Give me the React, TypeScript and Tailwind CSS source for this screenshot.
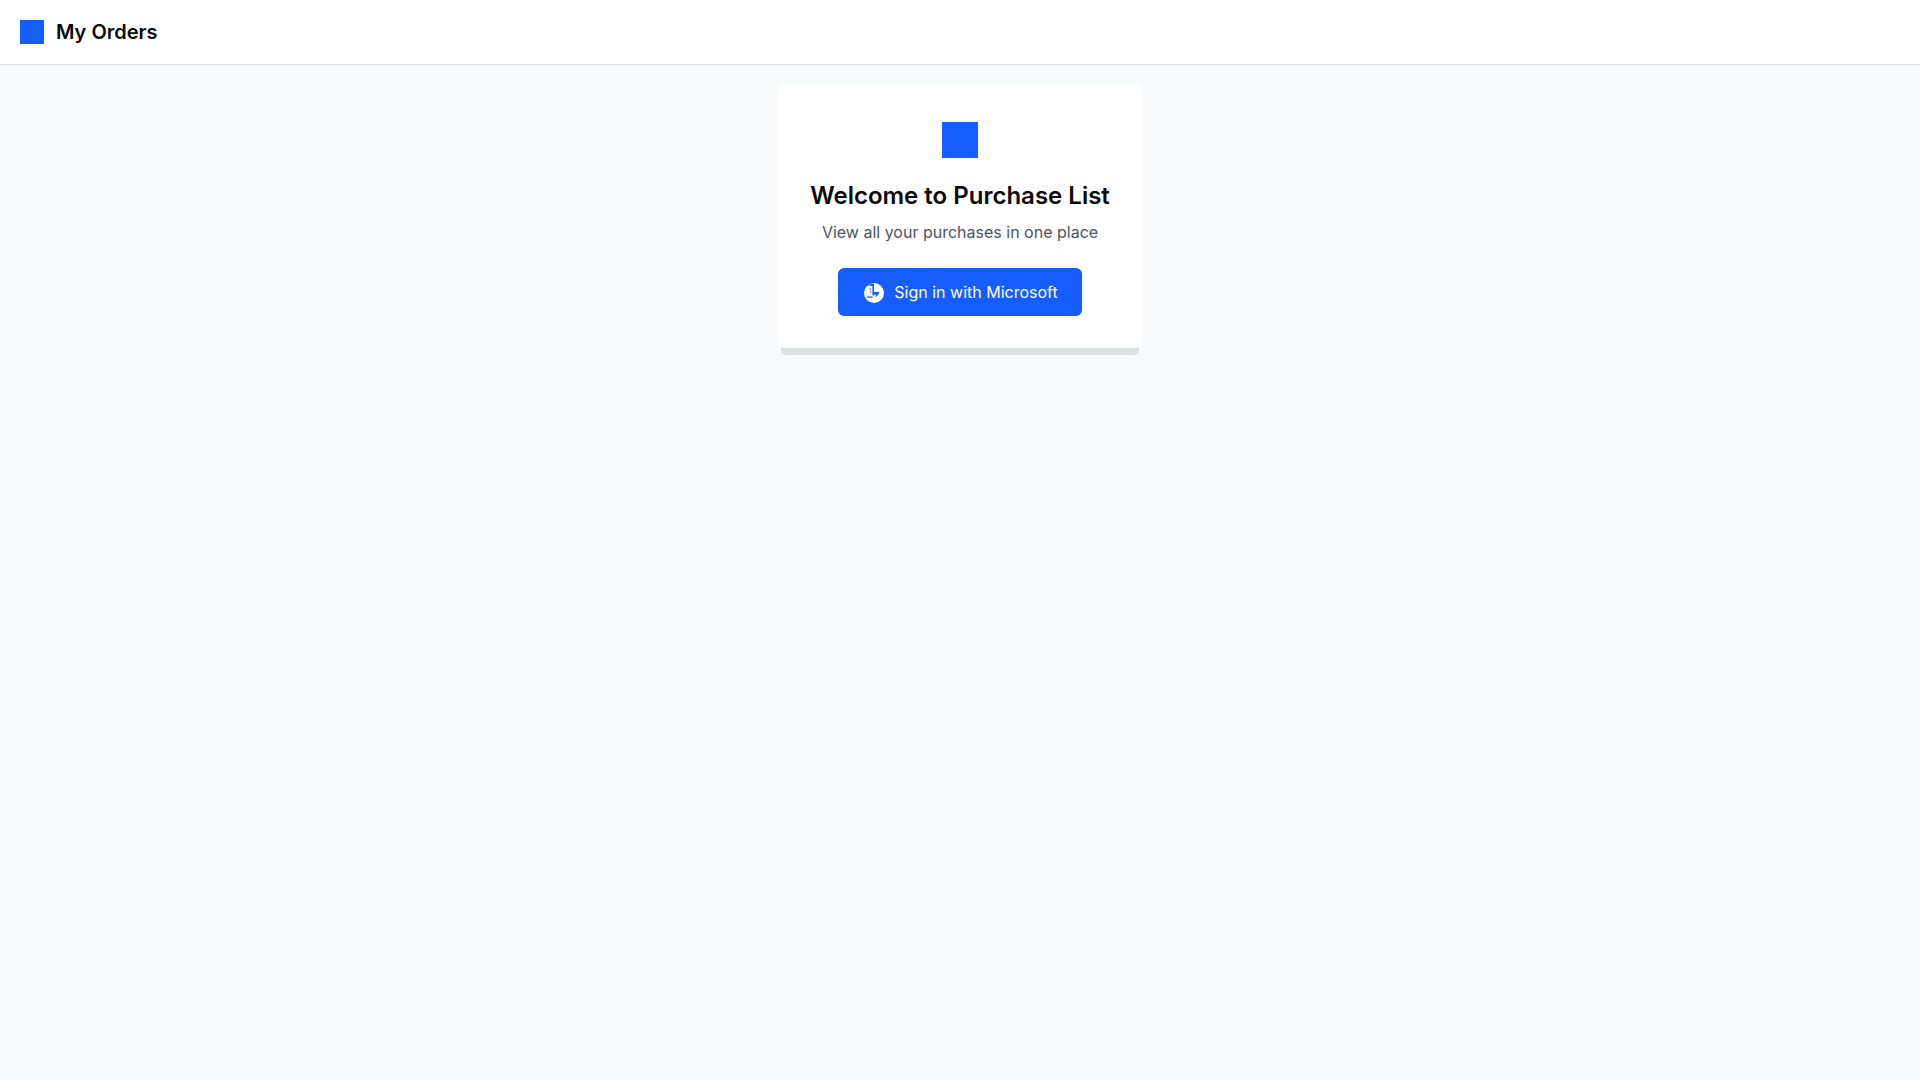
function SignInIcon() {
  return (
    <svg className="h-6 w-6" viewBox="0 -1 24 24" aria-hidden="true">
      <circle cx="12" cy="12" r="10" fill="#fff" />
      <path
        d="M4.4 3.4H8.4L9 2.8H12V11H17.2L16.4 13.6L14.4 15.6L13.4 15.4L14 13.4H12.2V14.6H10.4V5H8V4.4H4.4Z"
        fill="#155dfc"
      />
      <path d="M7.4 7.6H9V8.6H7.4ZM7.8 10.2H9V11.6H7.8ZM5 15.6H10.6V16.8H5Z" fill="#155dfc" />
    </svg>
  );
}

export default function App() {
  return (
    <div className="min-h-screen bg-gray-50 font-['Inter',sans-serif] text-base text-neutral-950">
      <header className="flex h-[65px] items-center gap-3 border-b border-[#dee2e6] bg-white px-5">
        <span className="h-6 w-6 bg-[#155dfc]" aria-hidden="true" />
        <h1 className="text-xl font-semibold">My Orders</h1>
      </header>

      <main className="flex justify-center px-5 py-[19px]">
        <section className="flex flex-col items-center rounded-lg bg-white p-8 text-center shadow-[0_10px_0_-3px_#dfe0e2]">
          {/* Logo */}
          <span className="mt-1.5 h-9 w-9 bg-[#155dfc]" aria-hidden="true" />
          <h2 className="mt-[22px] text-2xl font-semibold">Welcome to Purchase List</h2>
          <p className="mt-2 text-gray-600">View all your purchases in one place</p>
          <button
            type="button"
            className="mt-6 flex h-12 items-center gap-2 rounded-md bg-[#155dfc] px-6 text-white"
          >
            <SignInIcon />
            Sign in with Microsoft
          </button>
        </section>
      </main>
    </div>
  );
}
